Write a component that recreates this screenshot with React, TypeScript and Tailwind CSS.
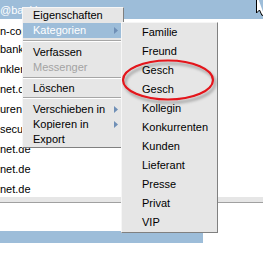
import React from "react";

const rows = [
  "n-com",
  "bank",
  "nklen",
  "net.de",
  "urenc",
  "secur",
  "net.de",
  "net.de",
  "net.de",
];

function Arrow() {
  return (
    <svg width="4" height="7" viewBox="0 0 4 7" className="shrink-0">
      <path d="M0 0 L4 3.5 L0 7 Z" fill="#6f8fb6" />
    </svg>
  );
}

function MenuItem({
  label,
  active,
  disabled,
  sub,
}: {
  label: string;
  active?: boolean;
  disabled?: boolean;
  sub?: boolean;
}) {
  return (
    <div
      className={`flex h-[15px] items-center justify-between pl-[10px] pr-[5px] leading-[15px] ${
        active ? "bg-[#9dbdd9] text-white" : disabled ? "text-[#a3a3a3]" : "text-black"
      }`}
    >
      <span>{label}</span>
      {sub && <Arrow />}
    </div>
  );
}

function Sep({ h, t }: { h: string; t: string }) {
  return (
    <div className={`${h} ${t} flex flex-col`}>
      <div className="h-px bg-[#a6a6a6]" />
      <div className="h-px bg-white" />
    </div>
  );
}

const subItems = [
  "Familie",
  "Freund",
  "Gesch",
  "Gesch",
  "Kollegin",
  "Konkurrenten",
  "Kunden",
  "Lieferant",
  "Presse",
  "Privat",
  "VIP",
];

export default function App() {
  return (
    <div className="relative h-[259px] w-[263px] overflow-hidden bg-white font-['Liberation_Sans',Arial,sans-serif] text-[11px]">
      <div className="flex flex-col">
        <div className="h-[19px] bg-[#9dbdd9] pt-[4px] leading-[13px] text-white whitespace-nowrap">
          @bankl
        </div>
        {rows.map((r, i) => (
          <div
            key={i}
            className={`${i === rows.length - 1 ? "h-[18px]" : "h-[20px]"} ${i === 0 ? "pt-[6px]" : "pt-[4px]"} leading-[13px] text-black whitespace-nowrap`}
          >
            {r}
          </div>
        ))}
        <div className="h-[6px] border-b border-[#a0a0a0] bg-[#e6e6e6]" />
        <div className="h-[28px]" />
        <div className="h-[12px] w-[203px] bg-[#9dbdd9]" />
      </div>

      {/* main context menu */}
      <div className="absolute left-[22px] top-[7px] flex w-[102px] flex-col border border-b-[#808080] border-l-[#f6f6f6] border-r-[#808080] border-t-[#f6f6f6] bg-[#e6e6e6]">
        <MenuItem label="Eigenschaften" />
        <MenuItem label="Kategorien" active sub />
        <Sep h="h-[7px]" t="pt-[2px]" />
        <MenuItem label="Verfassen" />
        <MenuItem label="Messenger" disabled />
        <Sep h="h-[6px]" t="pt-[2px]" />
        <MenuItem label="Löschen" />
        <Sep h="h-[6px]" t="pt-[1px]" />
        <MenuItem label="Verschieben in" sub />
        <MenuItem label="Kopieren in" sub />
        <MenuItem label="Export" />
      </div>

      {/* submenu */}
      <div className="absolute left-[121px] top-[22px] flex w-[97px] flex-col border border-b-[#808080] border-l-[#f6f6f6] border-r-[#808080] border-t-[#f6f6f6] bg-[#e6e6e6]">
        {subItems.map((s, i) => (
          <div key={i} className="h-[19px] pl-[20px] leading-[19px] text-black">
            {s}
          </div>
        ))}
      </div>

      {/* red ellipse annotation */}
      <svg
        className="pointer-events-none absolute left-[118px] top-[53px]"
        width="108"
        height="58"
        viewBox="0 0 108 58"
      >
        <defs>
          <filter id="sh" x="-20%" y="-20%" width="140%" height="160%">
            <feDropShadow dx="2" dy="3" stdDeviation="1.5" floodColor="#000" floodOpacity="0.35" />
          </filter>
        </defs>
        <ellipse
          cx="50"
          cy="27"
          rx="45"
          ry="19.5"
          fill="none"
          stroke="#e3141b"
          strokeWidth="2.2"
          filter="url(#sh)"
        />
      </svg>

      {/* mouse cursor, partially visible */}
      <svg className="pointer-events-none absolute left-[255px] top-0" width="9" height="17" viewBox="0 0 9 17">
        <path d="M1.5 -6 L1.5 13 L4.5 10 L7 15.5 L9 14.5" fill="white" stroke="black" strokeWidth="1" />
      </svg>
    </div>
  );
}
